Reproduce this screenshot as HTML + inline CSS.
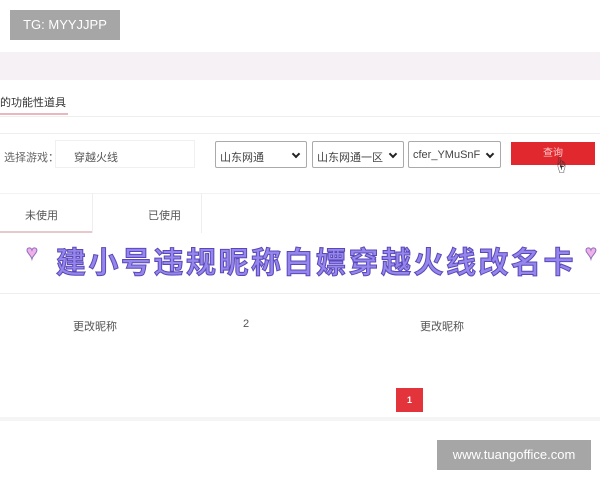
<!DOCTYPE html>
<html><head><meta charset="utf-8"><style>
body{margin:0;width:600px;height:480px;overflow:hidden;background:#fff;font-family:"Liberation Sans","Noto Sans CJK SC",sans-serif;position:relative;color:#555}
.a{position:absolute}
.sel{position:absolute;border:1px solid #aaa;border-radius:2px;background:#fff;font-size:11px;color:#444;box-sizing:border-box;padding:7px 0 0 4px}
.sel:after{content:"";position:absolute;right:7px;top:9px;width:4px;height:4px;border-right:2px solid #222;border-bottom:2px solid #222;transform:rotate(45deg)}
</style></head><body>
<div class="a" style="left:10px;top:10px;width:110px;height:30px;background:#a6a6a6;color:#fff;font-size:13px;line-height:30px;text-align:center">TG: MYYJJPP</div>
<div class="a" style="left:0;top:52px;width:600px;height:28px;background:#f6f1f4"></div>
<div class="a" style="left:0;top:94px;font-size:11px;color:#333">的功能性道具</div>
<div class="a" style="left:0;top:113px;width:68px;height:2px;background:#e8b8c0"></div>
<div class="a" style="left:0;top:116px;width:600px;height:1px;background:#eee"></div>
<div class="a" style="left:0;top:133px;width:600px;height:1px;background:#eee"></div>
<div class="a" style="left:4px;top:149px;font-size:11px;color:#666">选择游戏：</div>
<div class="a" style="left:55px;top:140px;width:140px;height:28px;border:1px solid #f0f0f0;box-sizing:border-box;font-size:11px;padding:8px 0 0 18px;color:#555">穿越火线</div>
<div class="sel" style="left:215px;top:141px;width:92px;height:27px">山东网通</div>
<div class="sel" style="left:312px;top:141px;width:92px;height:27px">山东网通一区</div>
<div class="sel" style="left:408px;top:141px;width:93px;height:27px">cfer_YMuSnF</div>
<div class="a" style="left:511px;top:142px;width:84px;height:23px;background:#e0282e;color:#fcc;font-size:10px;text-align:center;line-height:23px">查询</div>
<div class="a" style="left:553px;top:152px;font-size:16px;color:#333">☝</div>
<div class="a" style="left:0;top:193px;width:600px;height:1px;background:#f2f2f2"></div>
<div class="a" style="left:92px;top:193px;width:108px;height:40px;border-left:1px solid #eee;border-right:1px solid #eee"></div>
<div class="a" style="left:25px;top:207px;font-size:11px;color:#555">未使用</div>
<div class="a" style="left:148px;top:207px;font-size:11px;color:#555">已使用</div>
<div class="a" style="left:0;top:231px;width:92px;height:2px;background:#e8c8cc"></div>
<div class="a" style="left:0;top:293px;width:600px;height:1px;background:#eee"></div>
<div class="a" style="left:73px;top:318px;font-size:11px;color:#555">更改昵称</div>
<div class="a" style="left:243px;top:318px;font-size:11px;color:#555">2</div>
<div class="a" style="left:420px;top:318px;font-size:11px;color:#555">更改昵称</div>
<div class="a" style="left:396px;top:388px;width:27px;height:24px;background:#e3333b;color:#fff;font-size:9px;text-align:center;line-height:24px;font-weight:bold">1</div>
<div class="a" style="left:0;top:417px;width:600px;height:4px;background:#f5f5f5"></div>
<div class="a" style="left:26px;top:242px;font-size:20px;color:#f0b0e8;-webkit-text-stroke:1px #9070c0">♥</div>
<div class="a" style="left:585px;top:242px;font-size:20px;color:#f0b0e8;-webkit-text-stroke:1px #9070c0">♥</div>
<div class="a" style="left:56px;top:238px;font-size:30px;font-weight:bold;color:#9486ec;letter-spacing:2.5px;-webkit-text-stroke:1px #5a48b8;text-shadow:0 0 2px #fff,2px 2px 0 #fff,-2px -2px 0 #fff,2px -2px 0 #fff,-2px 2px 0 #fff;white-space:nowrap">建小号违规昵称白嫖穿越火线改名卡</div>
<div class="a" style="left:437px;top:440px;width:154px;height:30px;background:#a6a6a6;color:#fff;font-size:13px;line-height:30px;text-align:center">www.tuangoffice.com</div>
</body></html>
